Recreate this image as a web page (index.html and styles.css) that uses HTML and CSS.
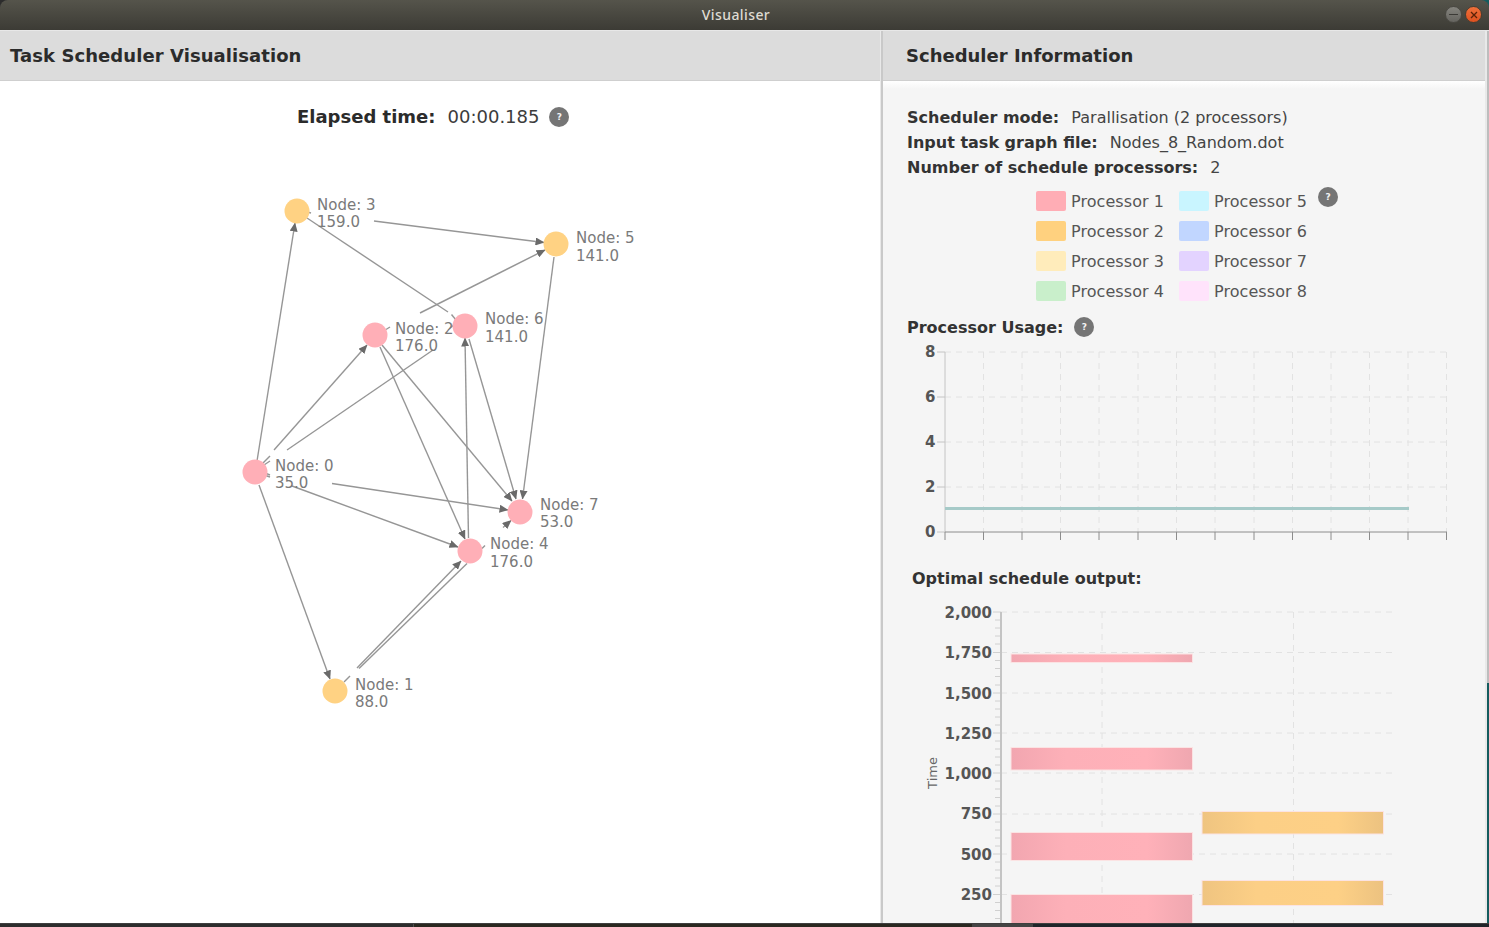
FILE: index.html
```html
<!DOCTYPE html>
<html lang="en">
<head>
  <meta charset="UTF-8" />
  <meta name="viewport" content="width=device-width, initial-scale=1" />
  <title>Visualiser</title>
  <link rel="stylesheet" href="styles.css">
</head>
<body>
  <div class="window">
    <header class="titlebar">
      <span class="titlebar-name">Visualiser</span>
      <div class="window-buttons">
        <span class="window-btn minimize"></span>
        <span class="window-btn close">
          <svg viewBox="0 0 8 8" width="8" height="8"><path d="M1 1L7 7M7 1L1 7" stroke="#5a2208" stroke-width="1.3"/></svg>
        </span>
      </div>
    </header>

    <main class="panes">
      <section class="pane pane-left">
        <h1 class="pane-title">Task Scheduler Visualisation</h1>
        <div class="elapsed">
          <span class="elapsed-label">Elapsed time:</span>
          <span class="elapsed-value">00:00.185</span>
          <span class="help">?</span>
        </div>

        <svg class="graph" viewBox="0 140 880 783" width="880" height="783">
          <defs>
            <marker id="arrow" viewBox="0 0 9 8" refX="8.5" refY="4" markerWidth="9" markerHeight="8" markerUnits="userSpaceOnUse" orient="auto">
              <path d="M0 0L9 4L0 8Z" fill="#6a6a6a"/>
            </marker>
          </defs>

          <!-- edges, broken where a node label sits on top of them -->
          <g class="edges">
            <line x1="374" y1="221" x2="544" y2="242.5" marker-end="url(#arrow)"/>
            <line x1="307" y1="218" x2="448" y2="312"/>
            <line x1="451.500" y1="314.500" x2="456" y2="320"/>
            <line x1="450" y1="328" x2="454" y2="325"/>
            <line x1="257" y1="461" x2="295" y2="223" marker-end="url(#arrow)"/>
            <line x1="274" y1="450" x2="367" y2="345" marker-end="url(#arrow)"/>
            <line x1="287" y1="450" x2="433" y2="350"/>
            <line x1="420" y1="313" x2="545" y2="250" marker-end="url(#arrow)"/>
            <line x1="386" y1="329.5" x2="390" y2="327"/>
            <line x1="382" y1="345" x2="512" y2="501" marker-end="url(#arrow)"/>
            <line x1="380" y1="347" x2="465" y2="539" marker-end="url(#arrow)"/>
            <line x1="468.500" y1="538" x2="465" y2="338" marker-end="url(#arrow)"/>
            <line x1="469" y1="339" x2="516" y2="499" marker-end="url(#arrow)"/>
            <line x1="554" y1="257" x2="522.500" y2="499" marker-end="url(#arrow)"/>
            <line x1="332" y1="483.500" x2="508" y2="510" marker-end="url(#arrow)"/>
            <line x1="292" y1="486" x2="458" y2="547" marker-end="url(#arrow)"/>
            <line x1="259" y1="485" x2="330" y2="679" marker-end="url(#arrow)"/>
            <line x1="357" y1="668" x2="461" y2="561" marker-end="url(#arrow)"/>
            <line x1="359" y1="668.500" x2="467" y2="563.500"/>
            <line x1="344" y1="682" x2="350" y2="676"/>
            <line x1="482" y1="548.500" x2="485" y2="545.500"/>
            <line x1="503" y1="527.500" x2="511" y2="520.500" marker-end="url(#arrow)"/>
            <line x1="263" y1="463" x2="270" y2="456"/>
            <line x1="264" y1="465" x2="270" y2="461"/>
            <line x1="264" y1="475" x2="270" y2="477"/>
            <line x1="265" y1="473" x2="270" y2="475"/>
            <line x1="307" y1="212" x2="311" y2="213"/>
          </g>

          <g class="nodes">
            <circle class="node-pink" cx="255" cy="472" r="12.500"/>
            <circle class="node-orange" cx="335" cy="691" r="12.500"/>
            <circle class="node-pink" cx="375" cy="335" r="12.500"/>
            <circle class="node-orange" cx="297" cy="211" r="12.500"/>
            <circle class="node-pink" cx="470" cy="551" r="12.500"/>
            <circle class="node-orange" cx="556" cy="244" r="12.500"/>
            <circle class="node-pink" cx="465" cy="326" r="12.500"/>
            <circle class="node-pink" cx="520" cy="512" r="12.500"/>
          </g>

          <g class="node-labels">
            <text x="275" y="471">Node: 0</text><text x="275" y="488">35.0</text>
            <text x="355" y="690">Node: 1</text><text x="355" y="707">88.0</text>
            <text x="395" y="334">Node: 2</text><text x="395" y="351">176.0</text>
            <text x="317" y="210">Node: 3</text><text x="317" y="227">159.0</text>
            <text x="490" y="549">Node: 4</text><text x="490" y="567">176.0</text>
            <text x="576" y="243">Node: 5</text><text x="576" y="261">141.0</text>
            <text x="485" y="324">Node: 6</text><text x="485" y="342">141.0</text>
            <text x="540" y="510">Node: 7</text><text x="540" y="527">53.0</text>
          </g>
        </svg>
      </section>

      <section class="pane pane-right">
        <h2 class="pane-title">Scheduler Information</h2>

        <div class="info">
          <p><b>Scheduler mode:</b> <span>Parallisation (2 processors)</span></p>
          <p><b>Input task graph file:</b> <span>Nodes_8_Random.dot</span></p>
          <p><b>Number of schedule processors:</b> <span>2</span></p>
        </div>

        <div class="legend">
          <div class="legend-item"><i class="swatch p1"></i>Processor 1</div>
          <div class="legend-item"><i class="swatch p5"></i>Processor 5</div>
          <span class="help legend-help">?</span>
          <div class="legend-item"><i class="swatch p2"></i>Processor 2</div>
          <div class="legend-item"><i class="swatch p6"></i>Processor 6</div>
          <span></span>
          <div class="legend-item"><i class="swatch p3"></i>Processor 3</div>
          <div class="legend-item"><i class="swatch p7"></i>Processor 7</div>
          <span></span>
          <div class="legend-item"><i class="swatch p4"></i>Processor 4</div>
          <div class="legend-item"><i class="swatch p8"></i>Processor 8</div>
        </div>

        <div class="usage-title">Processor Usage: <span class="help">?</span></div>
        <svg class="chart usage-chart" viewBox="883 340 602 205" width="602" height="205">
          <path class="grid" d="M945 352H1447M945 397H1447M945 442H1447M945 487H1447M983.500 352V532M1022 352V532M1060.500 352V532M1099 352V532M1138 352V532M1176.500 352V532M1215 352V532M1254 352V532M1292.500 352V532M1331 352V532M1369.500 352V532M1408 352V532M1446.500 352V532"/>
          <path class="axis-light" d="M945 352V532M937 352H945M937 397H945M937 442H945M937 487H945M937 532H945"/>
          <path class="axis-dark" d="M945 532H1447M945 532V540M983.500 532V540M1022 532V540M1060.500 532V540M1099 532V540M1138 532V540M1176.500 532V540M1215 532V540M1254 532V540M1292.500 532V540M1331 532V540M1369.500 532V540M1408 532V540M1446.500 532V540"/>
          <line class="usage-line" x1="945" y1="508.500" x2="1409" y2="508.500"/>
          <g class="tick-labels">
            <text x="935.500" y="357">8</text>
            <text x="935.500" y="402">6</text>
            <text x="935.500" y="447">4</text>
            <text x="935.500" y="492">2</text>
            <text x="935.500" y="537">0</text>
          </g>
        </svg>

        <div class="schedule-title">Optimal schedule output:</div>
        <svg class="chart schedule-chart" viewBox="883 595 602 328" width="602" height="328">
          <defs>
            <linearGradient id="barPink">
              <stop offset="0" stop-color="#f2a6b0"/><stop offset="0.3" stop-color="#fdb0b8"/>
              <stop offset="0.75" stop-color="#ffb1b9"/><stop offset="1" stop-color="#efa7b0"/>
            </linearGradient>
            <linearGradient id="barOrange">
              <stop offset="0" stop-color="#efc480"/><stop offset="0.3" stop-color="#fccf86"/>
              <stop offset="0.75" stop-color="#fdd086"/><stop offset="1" stop-color="#ecc280"/>
            </linearGradient>
          </defs>
          <path class="grid" d="M1001 612H1393M1001 652.500H1393M1001 693H1393M1001 733H1393M1001 773H1393M1001 814H1393M1001 854H1393M1001 894.500H1393M1102 612V923M1293.500 612V923"/>
          <path class="axis-minor" d="M993 612H1001M993 652.500H1001M993 693H1001M993 733H1001M993 773H1001M993 814H1001M993 854H1001M993 894.500H1001M995 620H1001M995 628H1001M995 636H1001M995 644H1001M995 660.500H1001M995 668.500H1001M995 676.500H1001M995 685H1001M995 701H1001M995 709H1001M995 717H1001M995 725H1001M995 741H1001M995 749H1001M995 757H1001M995 765H1001M995 781H1001M995 789H1001M995 797.500H1001M995 806H1001M995 822H1001M995 830H1001M995 838H1001M995 846H1001M995 862H1001M995 870H1001M995 878H1001M995 886H1001M995 902.500H1001M995 910.500H1001M995 918.500H1001"/>
          <line class="axis-main" x1="1001" y1="612" x2="1001" y2="923"/>

          <rect class="bar" fill="url(#barPink)" x="1011" y="654" width="181.500" height="8.500"/>
          <rect class="bar" fill="url(#barPink)" x="1011" y="747.500" width="181.500" height="22.500"/>
          <rect class="bar" fill="url(#barPink)" x="1011" y="832.500" width="181.500" height="28"/>
          <rect class="bar" fill="url(#barPink)" x="1011" y="894.500" width="181.500" height="40"/>
          <rect class="bar" fill="url(#barOrange)" x="1202" y="811.500" width="181.500" height="22.500"/>
          <rect class="bar" fill="url(#barOrange)" x="1202" y="880.500" width="181.500" height="25"/>

          <g class="tick-labels">
            <text x="992" y="617.500">2,000</text>
            <text x="992" y="658">1,750</text>
            <text x="992" y="698.500">1,500</text>
            <text x="992" y="738.500">1,250</text>
            <text x="992" y="778.500">1,000</text>
            <text x="992" y="819">750</text>
            <text x="992" y="859.500">500</text>
            <text x="992" y="900">250</text>
          </g>
          <text class="axis-title" transform="translate(936.500 773) rotate(-90)">Time</text>
        </svg>
      </section>
      <div class="desktop-edge"></div>
    </main>
  </div>

  <footer class="taskbar">
    <span class="task task-main"></span>
    <span class="task task-mid"></span>
    <span class="task task-tab"></span>
    <span class="task task-rest"></span>
  </footer>
</body>
</html>
```

FILE: styles.css
```css
* {
  box-sizing: border-box;
  margin: 0;
  padding: 0;
}

body {
  width: 1489px;
  height: 927px;
  overflow: hidden;
  background-color: #2c2c2c;
  font-family: "DejaVu Sans", sans-serif;
  color: #444;
  display: flex;
  flex-direction: column;
}

.window {
  height: 923px;
  display: flex;
  flex-direction: column;
  background: linear-gradient(90deg, #2c2c2c 50%, #145c5e 50%);
}

/* title bar */
.titlebar {
  height: 31px;
  flex: none;
  display: flex;
  align-items: center;
  justify-content: center;
  position: relative;
  background: linear-gradient(#55544b, #3c3b35);
  border-bottom: 1px solid #e8e8e8;
  border-radius: 8px 8px 0 0;
}

.titlebar-name {
  margin-left: -17px;
  margin-top: -2px;
  font-family: "Noto Sans", sans-serif;
  font-size: 14px;
  font-weight: 500;
  letter-spacing: 0.4px;
  color: #dfdbd2;
}

.window-buttons {
  position: absolute;
  right: 7px;
  top: 6px;
  display: flex;
  gap: 3px;
}

.window-btn {
  width: 17px;
  height: 17px;
  border-radius: 50%;
  display: flex;
  align-items: center;
  justify-content: center;
}

.minimize {
  background: linear-gradient(#85847e, #65645f);
  border: 1px solid #4a4943;
}

.minimize::before {
  content: "";
  width: 9px;
  height: 1.500px;
  background-color: #3b3a36;
}

.close {
  background: linear-gradient(#f0703a, #dd5120);
  border: 1px solid #4a3d30;
}

/* panes */
.panes {
  flex: 1;
  min-height: 0;
  display: flex;
  background-color: #e9e9e9;
}

.pane {
  overflow: hidden;
}

.pane-left {
  width: 880px;
  flex: none;
  background-color: #fff;
}

.pane-right {
  width: 604px;
  flex: none;
  margin-left: 1px;
  border-left: 2px solid #c9c9c9;
  background: linear-gradient(#fff 50px, #f5f5f5 58px);
}

.desktop-edge {
  flex: 1;
  margin-left: 2px;
  background: linear-gradient(#bdbdbd 652px, #145c5e 652px);
}

.pane-title {
  height: 50px;
  display: flex;
  align-items: center;
  background-color: #dcdcdc;
  border-bottom: 1px solid #cfcfcf;
  font-size: 18px;
  font-weight: bold;
  color: #2b2b2b;
}

.pane-left .pane-title {
  padding-left: 10px;
  letter-spacing: 0.07px;
}

.pane-right .pane-title {
  padding-left: 23px;
}

.help {
  display: inline-flex;
  align-items: center;
  justify-content: center;
  width: 20px;
  height: 20px;
  border-radius: 50%;
  background-color: #757575;
  color: #f2f2f2;
  font-size: 9px;
  font-weight: bold;
}

.elapsed {
  height: 24px;
  margin: 23px 0 0 297px;
  display: flex;
  align-items: center;
  font-size: 18px;
  color: #2b2b2b;
}

.elapsed .help {
  margin-top: 2px;
}

.elapsed-label {
  font-weight: bold;
  margin-right: 12px;
}

.elapsed-value {
  margin-right: 10px;
  color: #3c3c3c;
}

/* graph */
.graph {
  display: block;
  margin-top: 12px;
}

.edges line {
  stroke: #969696;
  stroke-width: 1.400;
}

.node-pink {
  fill: #ffafb7;
}

.node-orange {
  fill: #ffd283;
}

.node-labels text {
  font-size: 15px;
  fill: #7a7a7a;
}

/* scheduler info */
.info {
  margin: 24px 0 0 24px;
  font-size: 16px;
  line-height: 25px;
}

.info b {
  color: #333;
  margin-right: 7px;
}

.legend {
  display: grid;
  grid-template-columns: 143px 138px 20px;
  grid-auto-rows: 30px;
  margin: 6px 0 0 153px;
}

.legend-item {
  display: flex;
  align-items: center;
  font-size: 16px;
  letter-spacing: 0.07px;
  color: #555;
}

.legend-help {
  margin-top: 1px;
  margin-left: 1px;
}

.swatch {
  width: 30px;
  height: 20px;
  margin-right: 5px;
  border-radius: 2px;
}

.p1 { background-color: #ffadb5; }
.p2 { background-color: #ffd17f; }
.p3 { background-color: #ffecbb; }
.p4 { background-color: #c9efcb; }
.p5 { background-color: #c9f5ff; }
.p6 { background-color: #c1d6ff; }
.p7 { background-color: #e3d3ff; }
.p8 { background-color: #ffe3fb; }

.usage-title {
  height: 24px;
  margin: 9px 0 0 24px;
  display: flex;
  align-items: center;
  font-size: 16px;
  font-weight: bold;
  color: #333;
}

.usage-title .help {
  margin-left: 11px;
}

.schedule-title {
  height: 24px;
  margin: 21px 0 0 29px;
  display: flex;
  align-items: center;
  font-size: 16px;
  font-weight: bold;
  color: #333;
}

/* charts */
.chart {
  display: block;
}

.usage-chart {
  margin-top: 1px;
}

.schedule-chart {
  margin-top: 5px;
}

.grid {
  fill: none;
  stroke: #e2e2e2;
  stroke-width: 1;
  stroke-dasharray: 6 5;
}

.axis-light,
.axis-minor,
.axis-main {
  fill: none;
  stroke: #c4c4c4;
}

.axis-minor {
  stroke: #d0d0d0;
}

.axis-main {
  stroke-width: 2;
}

.axis-dark {
  fill: none;
  stroke: #8c8c8c;
}

.usage-line {
  stroke: #a6cac8;
  stroke-width: 3;
}

.tick-labels text {
  font-size: 15px;
  font-weight: bold;
  fill: #555;
  text-anchor: end;
}

.axis-title {
  font-size: 13px;
  fill: #666;
  text-anchor: middle;
}

.bar {
  stroke: #fbe3e3;
  stroke-width: 1;
}

/* strip of the desktop panel under the window */
.taskbar {
  flex: 1;
  display: flex;
  border-top: 1px solid #3f3f3f;
}

.task {
  display: block;
}

.task-main {
  width: 414px;
  background-color: #2d2d2d;
  border-right: 1px solid #505050;
}

.task-mid {
  width: 558px;
  background-color: #2a2820;
}

.task-tab {
  width: 61px;
  background-color: #444;
}

.task-rest {
  flex: 1;
  background-color: #20252a;
}
```
